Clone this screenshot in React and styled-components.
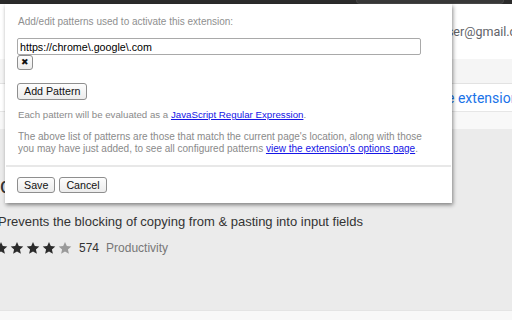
import React from 'react';
import styled, { createGlobalStyle } from 'styled-components';

const Global = createGlobalStyle`
  html, body {
    margin: 0;
    padding: 0;
    width: 512px;
    height: 320px;
    overflow: hidden;
    background: #f8f8f8;
    font-family: "Liberation Sans", Arial, sans-serif;
  }
`;

const Page = styled.div`
  position: relative;
  width: 512px;
  height: 320px;
  overflow: hidden;
  display: flex;
  flex-direction: column;
`;

const TopBar = styled.div`
  height: 4px;
  background: #2b2b2b;
  display: flex;
  padding-left: 356px;
`;

const Omnibox = styled.div`
  width: 146px;
  height: 3px;
  background: #383838;
  border-radius: 0 0 6px 6px;
  border: 1px solid #474747;
  border-top: none;
`;

const Header = styled.div`
  height: 55px;
  background: #fff;
  display: flex;
  align-items: center;
  padding-left: 440px;
  white-space: nowrap;
  font-family: Roboto, "Liberation Sans", sans-serif;
  font-size: 12.5px;
  color: #5f6368;
`;

const Band = styled.div`
  height: ${p => p.h}px;
  background: ${p => p.bg};
  border-bottom: 1px solid ${p => p.line || 'transparent'};
  flex-shrink: 0;
`;

const LinkRow = styled.div`
  height: 27px;
  background: #fff;
  border-bottom: 1px solid #e6e6e6;
  display: flex;
  align-items: center;
  padding-left: 404px;
  white-space: nowrap;
  font-family: Roboto, "Liberation Sans", sans-serif;
  font-size: 14px;
  color: #1a73e8;
`;

const Main = styled.div`
  height: 182px;
  background: #ebebeb;
  border-bottom: 1px solid #e4e4e4;
  padding-top: 44px;
  box-sizing: border-box;
  display: flex;
  flex-direction: column;
  margin-left: -2px;
  white-space: nowrap;
`;

const Title = styled.div`
  font-size: 22px;
  line-height: 26px;
  color: #333;
  margin-left: -14px;
`;

const Description = styled.div`
  margin-top: 15px;
  font-size: 13px;
  line-height: 16px;
  color: #333;
`;

const RatingRow = styled.div`
  margin-top: 10px;
  margin-left: -4px;
  display: flex;
  align-items: center;
  height: 16px;
  gap: 2px;
  font-size: 12px;
`;

const Count = styled.span`
  color: #333;
  margin-left: 5px;
`;

const Category = styled.span`
  color: #777;
  margin-left: 5px;
`;

const Star = ({ color }) => (
  <svg width="14" height="14" viewBox="0 0 24 24">
    <path fill={color} d="M12 1.5l3.1 7.1 7.7.7-5.8 5.1 1.7 7.6L12 18l-6.7 4 1.7-7.6-5.8-5.1 7.7-.7z" />
  </svg>
);

const Popup = styled.div`
  position: absolute;
  left: 5px;
  top: 4px;
  width: 447px;
  height: 199px;
  box-sizing: border-box;
  background: #fff;
  box-shadow: 1px 2px 4px rgba(0, 0, 0, 0.45);
  padding: 11px 12px 0 12px;
  display: flex;
  flex-direction: column;
  align-items: flex-start;
  font-size: 10px;
`;

const Label = styled.div`
  color: #8f8f8f;
  font-size: 10px;
  line-height: 14px;
  padding-left: 1px;
  white-space: nowrap;
`;

const PatternInput = styled.input`
  margin: 9px 0 0 0;
  width: 404px;
  height: 17px;
  box-sizing: border-box;
  border: 1px solid #a9a9a9;
  border-radius: 2px;
  padding: 0 2px;
  font-family: "Liberation Sans", Arial, sans-serif;
  font-size: 10.7px;
  color: #000;
  outline: none;
`;

const Button = styled.button`
  margin-top: ${p => p.mt || 0}px;
  height: ${p => p.h || 17}px;
  width: ${p => (p.w ? `${p.w}px` : 'auto')};
  padding: 0 ${p => p.px ?? 6}px;
  box-sizing: border-box;
  background: linear-gradient(#fdfdfd, #ececec);
  border: 1px solid #8e8e8e;
  border-radius: 3px;
  font-family: "Liberation Sans", Arial, sans-serif;
  font-size: ${p => p.fs || 10.7}px;
  color: #111;
  line-height: 1;
  display: flex;
  align-items: center;
  justify-content: center;
`;

const Note = styled.div`
  margin-top: ${p => p.mt}px;
  color: #8a8a8a;
  font-size: ${p => p.fs || 10}px;
  line-height: ${p => p.lh || 14}px;
  padding-left: 1px;
  white-space: nowrap;
  a {
    color: #1515e6;
    text-decoration: underline;
  }
`;

const Divider = styled.div`
  align-self: stretch;
  margin: 11px -11px 0 -11px;
  height: 2px;
  background: #e8e8e8;
`;

const Actions = styled.div`
  margin-top: 10px;
  display: flex;
  gap: 4px;
`;

export default function App() {
  return (
    <Page>
      <Global />
      <TopBar><Omnibox /></TopBar>
      <Header>user@gmail.com</Header>
      <Band h={24} bg="#f5f5f5" line="#e2e2e2" />
      <LinkRow>Manage extension</LinkRow>
      <Band h={16} bg="#f8f8f8" />
      <Main>
        <Title>Don't F*** With Paste</Title>
        <Description>Prevents the blocking of copying from &amp; pasting into input fields</Description>
        <RatingRow>
          <Star color="#2b2b2b" />
          <Star color="#2b2b2b" />
          <Star color="#2b2b2b" />
          <Star color="#2b2b2b" />
          <Star color="#9a9a9a" />
          <Count>574</Count>
          <Category>Productivity</Category>
        </RatingRow>
      </Main>
      <Popup>
        <Label>Add/edit patterns used to activate this extension:</Label>
        <PatternInput defaultValue="https://chrome\.google\.com" />
        <Button h={15} w={16} px={0} fs={9}>✖</Button>
        <Button mt={13} px={6}>Add Pattern</Button>
        <Note mt={8} fs={9.7}>
          Each pattern will be evaluated as a <a href="#">JavaScript Regular Expression</a>.
        </Note>
        <Note mt={9} lh={11.5}>
          The above list of patterns are those that match the current page's location, along with those
          <br />
          you may have just added, to see all configured patterns <a href="#">view the extension's options page</a>.
        </Note>
        <Divider />
        <Actions>
          <Button h={16} px={6}>Save</Button>
          <Button h={16} px={6}>Cancel</Button>
        </Actions>
      </Popup>
    </Page>
  );
}
